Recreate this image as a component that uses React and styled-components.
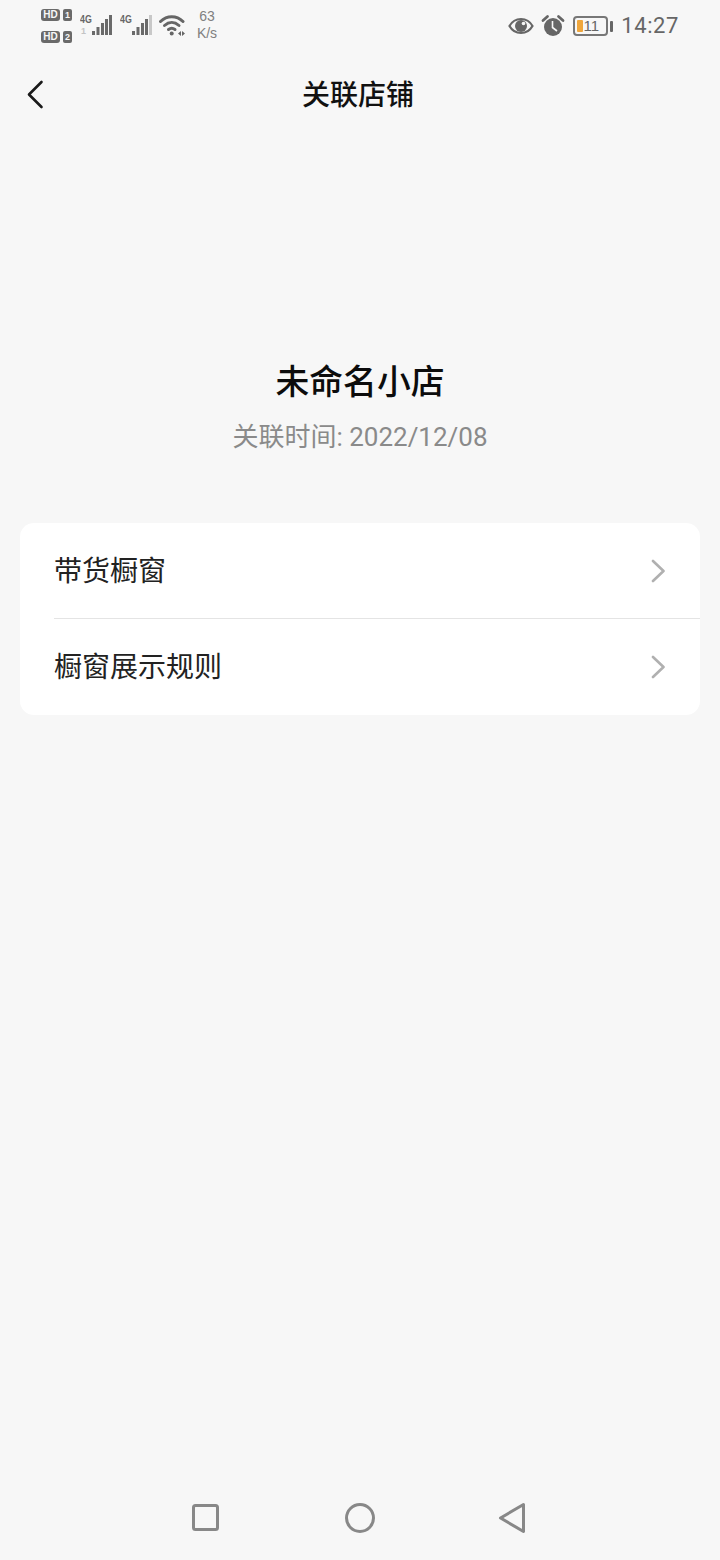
import React from 'react';
import styled, { createGlobalStyle } from 'styled-components';

const GlobalStyle = createGlobalStyle`
  html, body {
    margin: 0;
    padding: 0;
    background: #f7f7f7;
  }
  * {
    box-sizing: border-box;
  }
`;

const Page = styled.div`
  width: 720px;
  height: 1560px;
  display: flex;
  flex-direction: column;
  background: #f7f7f7;
  overflow: hidden;
  font-family: "Noto Sans CJK SC", "Liberation Sans", sans-serif;
`;

const StatusBar = styled.div`
  height: 50px;
  flex: none;
  display: flex;
  align-items: center;
  justify-content: space-between;
  padding: 2px 41px 0 41px;
  color: #666;
`;

const StatusGroup = styled.div`
  display: flex;
  align-items: center;
`;

const SimStack = styled.div`
  display: flex;
  flex-direction: column;
  gap: 10px;
  margin-right: 8px;
`;

const SimRow = styled.div`
  display: flex;
  align-items: center;
  gap: 3px;
`;

const HdBadge = styled.span`
  width: 19px;
  height: 12px;
  border-radius: 3px;
  background: #6a6a6a;
  color: #f7f7f7;
  font: 700 10px/12px "Liberation Sans", sans-serif;
  text-align: center;
`;

const SimNumber = styled.span`
  width: 9px;
  height: 12px;
  border-radius: 2px;
  background: #6a6a6a;
  color: #f7f7f7;
  font: 700 9px/12px "Liberation Sans", sans-serif;
  text-align: center;
`;

const Signal = styled.div`
  position: relative;
  width: 32px;
  height: 24px;
  margin-right: ${(p) => p.$gap}px;
`;

const NetLabel = styled.span`
  position: absolute;
  left: 0;
  top: 0;
  font: 700 11px/10px "Liberation Sans", sans-serif;
  color: #666;
  transform: scaleX(0.8);
  transform-origin: left top;
`;

const ActivityLabel = styled.span`
  position: absolute;
  left: 1px;
  top: 12px;
  font: 700 9px/10px "Liberation Sans", sans-serif;
  color: #c4c4c4;
`;

const Speed = styled.div`
  width: 24px;
  margin-left: 9px;
  margin-top: -2px;
  font: 400 14px/17px "Liberation Sans", sans-serif;
  color: #808080;
  text-align: center;
`;

const BatteryBody = styled.div`
  position: relative;
  width: 35px;
  height: 20px;
  border: 2px solid #777;
  border-radius: 4px;
  margin-left: 8px;
  overflow: hidden;
  color: #666;
  font: 400 15px/16px "Liberation Sans", sans-serif;
  text-align: center;
  padding-left: 1px;
`;

const BatteryFill = styled.span`
  position: absolute;
  left: 2px;
  top: 2px;
  bottom: 2px;
  width: 6px;
  background: #efa63c;
  border-radius: 1px;
`;

const BatteryCap = styled.span`
  width: 3px;
  height: 11px;
  margin-left: 2px;
  border-radius: 1px;
  background: #666;
`;

const Clock = styled.span`
  margin-left: 8px;
  font: 400 22px/28px "Roboto", "Liberation Sans", sans-serif;
  letter-spacing: 0.6px;
  color: #666;
`;

const Header = styled.header`
  position: relative;
  height: 90px;
  flex: none;
  display: flex;
  align-items: center;
  justify-content: center;
  padding: 0 4px 4px 0;
`;

const BackButton = styled.button`
  position: absolute;
  left: 24px;
  top: 29px;
  width: 22px;
  height: 32px;
  padding: 0;
  border: 0;
  background: none;
  display: flex;
`;

const Title = styled.h1`
  margin: 0;
  font-size: 28px;
  line-height: 40px;
  font-weight: 500;
  color: #111;
`;

const ShopInfo = styled.section`
  flex: none;
  display: flex;
  flex-direction: column;
  align-items: center;
  padding-top: 216px;
`;

const ShopName = styled.h2`
  margin: 0;
  font-size: 33.8px;
  line-height: 48px;
  font-weight: 500;
  color: #0c0c0c;
`;

const LinkedTime = styled.p`
  margin: 15px 0 0;
  font-family: "Roboto", "Noto Sans CJK SC", sans-serif;
  font-size: 26px;
  line-height: 36px;
  font-weight: 400;
  color: #8a8a8a;
`;

const Card = styled.ul`
  margin: 68px 20px 0;
  padding: 0;
  list-style: none;
  background: #fff;
  border-radius: 14px;
  overflow: hidden;
`;

const Row = styled.li`
  height: ${(p) => (p.$first ? 95 : 97)}px;
  margin-left: 34px;
  padding-right: 35px;
  display: flex;
  align-items: center;
  justify-content: space-between;
  border-top: ${(p) => (p.$first ? 'none' : '1px solid #e4e4e4')};
`;

const RowLabel = styled.span`
  margin-bottom: 4px;
  font-size: 28px;
  line-height: 40px;
  color: #222;
`;

const NavBar = styled.nav`
  margin-top: auto;
  height: 88px;
  flex: none;
  display: flex;
  align-items: flex-start;
  justify-content: center;
  gap: 121px;
  padding-top: 30px;
`;

const NavIcon = styled.svg`
  width: 32px;
  height: 32px;
  fill: none;
  stroke: #888;
  stroke-width: 3;
  stroke-linejoin: round;
`;

const Bars = ({ dim }) => (
  <svg width="32" height="24" viewBox="0 0 32 24" style={{ position: 'absolute', left: 0, top: 0 }}>
    {[
      [12, 17, 4],
      [16.5, 13, 8],
      [21, 9, 12],
      [25, 5, 16],
      [29, 1, 20],
    ].map(([x, y, h], i) => (
      <rect key={x} x={x} y={y} width="3" height={h} fill={dim && i === 4 ? '#c8c8c8' : '#6a6a6a'} />
    ))}
  </svg>
);

const App = () => (
  <>
    <GlobalStyle />
    <Page>
      <StatusBar>
        <StatusGroup>
          <SimStack>
            <SimRow>
              <HdBadge>HD</HdBadge>
              <SimNumber>1</SimNumber>
            </SimRow>
            <SimRow>
              <HdBadge>HD</HdBadge>
              <SimNumber>2</SimNumber>
            </SimRow>
          </SimStack>
          <Signal $gap={8}>
            <NetLabel>4G</NetLabel>
            <ActivityLabel>1</ActivityLabel>
            <Bars />
          </Signal>
          <Signal $gap={7}>
            <NetLabel>4G</NetLabel>
            <Bars dim />
          </Signal>
          <svg width="27" height="24" viewBox="0 0 27 24" fill="none" stroke="#666" strokeWidth="3" strokeLinecap="round">
            <path d="M1.5 7.5C8 1 17.5 1 24 7.5" />
            <path d="M5.5 11.5C10 7.5 15.5 7.5 20 11.5" />
            <path d="M9.5 15.5C11.5 14 14 14 16 15.5" />
            <circle cx="12.7" cy="19.5" r="2" fill="#666" stroke="none" />
            <path d="M22 17v5l-3-2.5ZM23 17v5l3-2.5Z" fill="#666" stroke="none" />
          </svg>
          <Speed>
            63
            <br />
            K/s
          </Speed>
        </StatusGroup>
        <StatusGroup>
          <svg width="26" height="18" viewBox="0 0 26 18">
            <path d="M1.5 9C4 4.5 8 2 13 2S22 4.5 24.5 9C22 13.5 18 16 13 16S4 13.5 1.5 9Z" fill="none" stroke="#666" strokeWidth="2.2" />
            <circle cx="13" cy="9" r="6" fill="#666" />
            <circle cx="15.5" cy="6.5" r="1.8" fill="#f7f7f7" />
          </svg>
          <svg width="24" height="24" viewBox="0 0 24 24" style={{ marginLeft: 7 }}>
            <circle cx="12" cy="13" r="9" fill="#666" />
            <path d="M11.5 7v6.5l4.5 3.5" fill="none" stroke="#f7f7f7" strokeWidth="1.6" />
            <path d="M2 6.5L6.5 2.5M22 6.5L17.5 2.5" stroke="#666" strokeWidth="2.8" strokeLinecap="round" />
          </svg>
          <BatteryBody>
            <BatteryFill />
            11
          </BatteryBody>
          <BatteryCap />
          <Clock>14:27</Clock>
        </StatusGroup>
      </StatusBar>

      <Header>
        <BackButton aria-label="返回">
          <svg width="22" height="32" viewBox="0 0 22 32" fill="none" stroke="#1a1a1a" strokeWidth="2.6" strokeLinecap="round" strokeLinejoin="round">
            <path d="M17.5 3L5 15.5L17.5 28" />
          </svg>
        </BackButton>
        <Title>关联店铺</Title>
      </Header>

      <ShopInfo>
        <ShopName>未命名小店</ShopName>
        <LinkedTime>关联时间: 2022/12/08</LinkedTime>
      </ShopInfo>

      <Card>
        {['带货橱窗', '橱窗展示规则'].map((label, i) => (
          <Row key={label} $first={i === 0}>
            <RowLabel>{label}</RowLabel>
            <svg width="14" height="24" viewBox="0 0 14 24" fill="none" stroke="#b0b0b0" strokeWidth="2.6" strokeLinecap="round" strokeLinejoin="round">
              <path d="M2 2L12.5 12L2 22" />
            </svg>
          </Row>
        ))}
      </Card>

      <NavBar>
        <NavIcon viewBox="0 0 32 32">
          <rect x="2.5" y="3.5" width="24" height="24" rx="2" />
        </NavIcon>
        <NavIcon viewBox="0 0 32 32">
          <circle cx="16" cy="16" r="13.5" />
        </NavIcon>
        <NavIcon viewBox="0 0 32 32">
          <path d="M26.5 2.5L3.5 16L26.5 29.5Z" />
        </NavIcon>
      </NavBar>
    </Page>
  </>
);

export default App;
